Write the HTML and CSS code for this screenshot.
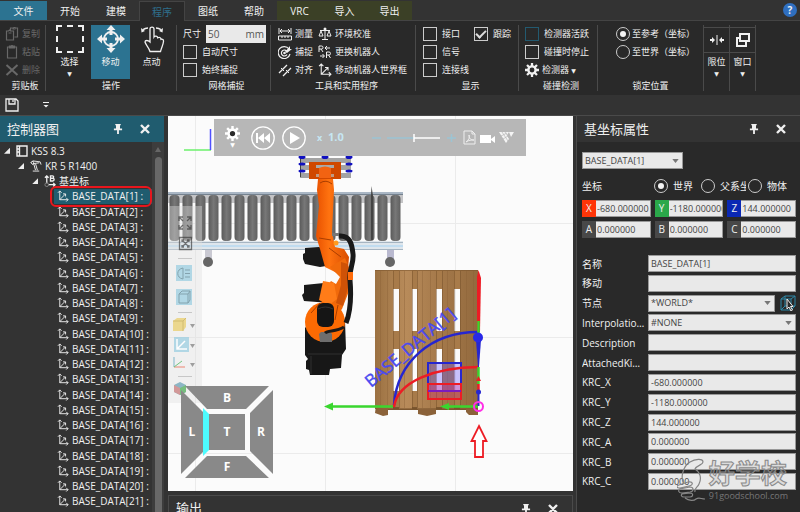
FILE: index.html
```html
<!DOCTYPE html>
<html lang="zh-CN">
<head>
    <meta charset="UTF-8">
    <meta name="viewport" content="width=device-width, initial-scale=1.0">
    <title>控制器图</title>
    <link rel="stylesheet" href="styles.css">
</head>
<body>
    <!-- icons used more than once -->
    <svg class="sprite" aria-hidden="true">
        <symbol id="i-pin" viewBox="0 0 10 11"><path d="M2 0h6v1.5H7.2V5H9.5v2H6v4H4V7H.5V5h2.300V1.500H2z" fill="currentColor"/></symbol>
        <symbol id="i-close" viewBox="0 0 10 10"><path d="M1 1l8 8M9 1l-8 8" stroke="currentColor" stroke-width="2.400"/></symbol>
        <symbol id="i-axes" viewBox="0 0 13 13"><path d="M3 1v9.500h9M3 10.500l6-6M1 3l2-2 2 2M10 8.500l2 2-2 2M6.500 4.200h2.800v2.800" fill="none" stroke="currentColor"/></symbol>
        <symbol id="i-gear" viewBox="0 0 16 16"><path d="M8 0v16M0 8h16M2.300 2.300l11.400 11.400M13.700 2.300L2.300 13.700" stroke="currentColor" stroke-width="2.600"/><circle cx="8" cy="8" r="4.200" fill="none" stroke="currentColor" stroke-width="2.600"/><circle class="gear-hole" cx="8" cy="8" r="2.800"/></symbol>
    </svg>

    <!-- BEGIN::tabs -->
    <nav class="tabs">
        <a class="tab tab-file" href="#">文件</a>
        <a class="tab" href="#">开始</a>
        <a class="tab" href="#">建模</a>
        <a class="tab tab-active" href="#">程序</a>
        <a class="tab" href="#">图纸</a>
        <a class="tab" href="#">帮助</a>
        <a class="tab tab-vrc" href="#">VRC</a>
        <a class="tab tab-vrc" href="#">导入</a>
        <a class="tab tab-vrc" href="#">导出</a>
        <button class="help">?</button>
    </nav>
    <!-- END::tabs -->

    <!-- BEGIN::ribbon -->
    <section class="ribbon">
        <div class="group group-clip">
            <div class="rows">
                <button class="tool" disabled><svg class="icon" viewBox="0 0 13 14"><path d="M5 4V1h3l1-1 1 1h2v9H9M1 4h2l1-1 1 1h3v9H1zM3 6h3M7 2h3" fill="none" stroke="currentColor" stroke-width="1.200"/></svg>复制</button>
                <button class="tool" disabled><svg class="icon" viewBox="0 0 13 14"><path d="M2 2h9v11H2zM4 3V1h2l.5-1L7 1h2v2z" fill="none" stroke="currentColor" stroke-width="1.200"/></svg>粘贴</button>
                <button class="tool" disabled><svg class="icon" viewBox="0 0 13 14"><path d="M1 2l11 10M12 2L1 12" stroke="currentColor" stroke-width="2"/></svg>删除</button>
            </div>
            <h2>剪贴板</h2>
        </div>
        <div class="group group-action">
            <div class="bigs">
                <button class="big"><svg viewBox="0 0 28 28"><path d="M1 6V1h5M11 1h6M22 1h5v5M27 11v6M27 22v5h-5M17 27h-6M6 27H1v-5M1 17v-6" fill="none" stroke="currentColor" stroke-width="2"/></svg>选择<span class="caret">▼</span></button>
                <button class="big big-on"><svg viewBox="0 0 28 28"><circle cx="14" cy="14" r="7" fill="none" stroke="currentColor" stroke-width="1.800"/><path d="M14 0l4.500 5h-3v5h-3V5h-3zM14 28l4.500-5h-3v-5h-3v5h-3zM0 14l5-4.500v3h5v3H5v3zM28 14l-5-4.500v3h-5v3h5v3z" fill="currentColor"/></svg>移动</button>
                <button class="big"><svg viewBox="0 0 28 28"><path d="M12 17V4c0-2.500 4-2.500 4 0v8c1-1.500 3.500-1 3.800.8 1.200-1 3.200-.3 3.200 1.500 1.500-.5 2.700.5 2.500 2.200-.5 4-2 6-3 10H12c-1-4-4-6-5-9.500 0-2 3-2 5 0z" fill="none" stroke="currentColor" stroke-width="1.300"/><path d="M10 3C8 3 6.500 3.500 5 4.700M18 3c2 0 3.500.5 5 1.700" fill="none" stroke="currentColor" stroke-width="1.500"/><path d="M3 3l.5 4.500L7 6zM25 3l-.5 4.500L21 6z" fill="currentColor"/></svg>点动</button>
            </div>
            <h2>操作</h2>
        </div>
        <div class="group group-grid">
            <div class="rows">
                <div class="size"><label for="size">尺寸</label><span class="size-box"><input id="size" value="50"><span>mm</span></span></div>
                <label class="check"><input type="checkbox">自动尺寸</label>
                <label class="check"><input type="checkbox">始终捕捉</label>
            </div>
            <h2>网格捕捉</h2>
        </div>
        <div class="group group-tools">
            <div class="cols">
                <div class="rows">
                    <button class="tool"><svg class="icon" viewBox="0 0 14 14"><path d="M1 1v6M13 1v6M2 4h10M4 2L2 4l2 2M10 2l2 2-2 2M.5 9h13v4H.5zM4 9v2M7 9v2M10 9v2" fill="none" stroke="currentColor"/></svg>测量</button>
                    <button class="tool"><svg class="icon" viewBox="0 0 14 14"><path d="M11 4a6 6 0 1 0 1 5M9 6.500a3 3 0 1 0 0 3" fill="none" stroke="currentColor" stroke-width="1.200"/><circle cx="6.500" cy="8" r="1.300" fill="currentColor"/><path d="M7 7l5-6v3l2 0-5 4z" fill="currentColor"/></svg>捕捉</button>
                    <button class="tool"><svg class="icon" viewBox="0 0 14 14"><path d="M1 10L9 2M5 13l8-8" stroke="currentColor" stroke-width="1.300"/><path d="M3 5l3 3M8 7l3 3" stroke="currentColor"/></svg>对齐</button>
                </div>
                <div class="rows">
                    <button class="tool"><svg class="icon" viewBox="0 0 14 14"><path d="M7 1v11M4 12.500h6M2 3.500h10M3 4L1 9h4zM11 4L9 9h4z" fill="none" stroke="currentColor"/><circle cx="7" cy="2" r="1.500" fill="currentColor"/></svg>环境校准</button>
                    <button class="tool"><svg class="icon" viewBox="0 0 14 14"><path d="M1 7V1h2.500a1.500 1.500 0 0 1 0 3H1M3 4l2 3M8.500 13V7H11a1.500 1.500 0 0 1 0 3H8.500M10.500 10l2 3M7 3h5M9 1L7 3l2 2M2 11h4M4.500 9l2 2-2 2" fill="none" stroke="currentColor"/></svg>更换机器人</button>
                    <button class="tool"><svg class="icon"><use href="#i-axes"/></svg>移动机器人世界框</button>
                </div>
            </div>
            <h2>工具和实用程序</h2>
        </div>
        <div class="group group-show">
            <div class="cols">
                <div class="rows">
                    <label class="check"><input type="checkbox">接口</label>
                    <label class="check"><input type="checkbox">信号</label>
                    <label class="check"><input type="checkbox">连接线</label>
                </div>
                <div class="rows">
                    <label class="check"><input type="checkbox" checked>跟踪</label>
                </div>
            </div>
            <h2>显示</h2>
        </div>
        <div class="group group-collide">
            <div class="rows">
                <label class="check check-blue"><input type="checkbox">检测器活跃</label>
                <label class="check"><input type="checkbox">碰撞时停止</label>
                <button class="tool"><svg class="icon"><use href="#i-gear"/></svg><span>检测器 <span class="caret">▼</span></span></button>
            </div>
            <h2>碰撞检测</h2>
        </div>
        <div class="group group-lock">
            <div class="rows">
                <label class="check"><input type="radio" name="lock" checked>至参考（坐标）</label>
                <label class="check"><input type="radio" name="lock">至世界（坐标）</label>
            </div>
            <h2>锁定位置</h2>
        </div>
        <button class="drop"><span class="drop-icon"><svg viewBox="0 0 16 16"><path d="M8 3v10" stroke="currentColor"/><path d="M1 7h2V5l3 3-3 3V9H1zM15 7h-2V5l-3 3 3 3V9h2z" fill="currentColor"/></svg></span>限位<span class="caret">▼</span></button>
        <button class="drop"><span class="drop-icon"><svg viewBox="0 0 16 16"><path d="M5 2h9v7H5zM4 6H2v8h9v-4" fill="none" stroke="currentColor" stroke-width="2"/></svg></span>窗口<span class="caret">▼</span></button>
    </section>
    <!-- END::ribbon -->

    <div class="quick">
        <button aria-label="保存"><svg viewBox="0 0 14 14"><path d="M1 1h10l2 2v10H1zM4 1v5h6V1M8 2v2" fill="none" stroke="currentColor" stroke-width="1.300"/></svg></button>
        <button class="quick-more" aria-label="更多"><svg viewBox="0 0 6 6"><path d="M0 .5h6" stroke="currentColor"/><path d="M.5 3h5L3 5.500z" fill="currentColor"/></svg></button>
    </div>

    <main class="main">
        <!-- BEGIN::tree -->
        <aside class="panel tree-panel">
            <header class="panel-head head-teal">
                <h1>控制器图</h1>
                <button aria-label="固定"><svg><use href="#i-pin"/></svg></button>
                <button aria-label="关闭"><svg><use href="#i-close"/></svg></button>
            </header>
            <div class="tree-body">
                <ul class="tree">
                    <li class="lv1"><i class="fold"></i><svg viewBox="0 0 12 12"><path d="M1 1h10v10H1zM3.500 1v10M1 4h2M1 7h2" fill="none" stroke="currentColor" stroke-width="1.400"/></svg>KSS 8.3</li>
                    <li class="lv2"><i class="fold"></i><svg viewBox="0 0 13 13"><path d="M1 3l2-2 8 1 1 3M3 4l7-1M3 1L1 3l2 2 1-2zM4 4l2 7M6 4l2 7M3 12h7" fill="none" stroke="currentColor"/></svg>KR 5 R1400</li>
                    <li class="lv3"><i class="fold"></i><svg viewBox="0 0 13 13"><path d="M3 9V1M1 3l2-2 2 2M5 10.500h7M10 8.500l2 2-2 2M7 1v5.500h2.500a1.500 1.500 0 0 0 0-3H7h2.200a1.200 1.200 0 0 0 0-2.500z" fill="none" stroke="currentColor" stroke-width="1.400"/><circle cx="3" cy="10.500" r="2" fill="none" stroke="#888"/></svg>基坐标</li>
                    <li class="lv4 selected"><svg><use href="#i-axes"/></svg>BASE_DATA[1] :</li>
                    <li class="lv4"><svg><use href="#i-axes"/></svg>BASE_DATA[2] :</li>
                    <li class="lv4"><svg><use href="#i-axes"/></svg>BASE_DATA[3] :</li>
                    <li class="lv4"><svg><use href="#i-axes"/></svg>BASE_DATA[4] :</li>
                    <li class="lv4"><svg><use href="#i-axes"/></svg>BASE_DATA[5] :</li>
                    <li class="lv4"><svg><use href="#i-axes"/></svg>BASE_DATA[6] :</li>
                    <li class="lv4"><svg><use href="#i-axes"/></svg>BASE_DATA[7] :</li>
                    <li class="lv4"><svg><use href="#i-axes"/></svg>BASE_DATA[8] :</li>
                    <li class="lv4"><svg><use href="#i-axes"/></svg>BASE_DATA[9] :</li>
                    <li class="lv4"><svg><use href="#i-axes"/></svg>BASE_DATA[10] :</li>
                    <li class="lv4"><svg><use href="#i-axes"/></svg>BASE_DATA[11] :</li>
                    <li class="lv4"><svg><use href="#i-axes"/></svg>BASE_DATA[12] :</li>
                    <li class="lv4"><svg><use href="#i-axes"/></svg>BASE_DATA[13] :</li>
                    <li class="lv4"><svg><use href="#i-axes"/></svg>BASE_DATA[14] :</li>
                    <li class="lv4"><svg><use href="#i-axes"/></svg>BASE_DATA[15] :</li>
                    <li class="lv4"><svg><use href="#i-axes"/></svg>BASE_DATA[16] :</li>
                    <li class="lv4"><svg><use href="#i-axes"/></svg>BASE_DATA[17] :</li>
                    <li class="lv4"><svg><use href="#i-axes"/></svg>BASE_DATA[18] :</li>
                    <li class="lv4"><svg><use href="#i-axes"/></svg>BASE_DATA[19] :</li>
                    <li class="lv4"><svg><use href="#i-axes"/></svg>BASE_DATA[20] :</li>
                    <li class="lv4"><svg><use href="#i-axes"/></svg>BASE_DATA[21] :</li>
                </ul>
                <div class="scroll"><i class="scroll-up"></i><div class="thumb"></div></div>
            </div>
        </aside>
        <!-- END::tree -->

        <!-- BEGIN::center -->
        <div class="center">
            <section class="view">
                <svg class="scene" viewBox="168 116 405 375" preserveAspectRatio="xMinYMin slice">
                    <defs>
                        <linearGradient id="roll"><stop offset="0" stop-color="#5a5a5a"/><stop offset=".5" stop-color="#777"/><stop offset="1" stop-color="#606060"/></linearGradient>
                        <pattern id="rollers" x="168" y="195" width="13" height="46" patternUnits="userSpaceOnUse">
                            <rect x="1.500" width="10" height="46" rx="4" fill="url(#roll)"/>
                        </pattern>
                        <linearGradient id="wood"><stop offset="0" stop-color="#9b7142"/><stop offset=".3" stop-color="#b88b5a"/><stop offset=".6" stop-color="#a67a4b"/><stop offset="1" stop-color="#936a3e"/></linearGradient>
                        <linearGradient id="arm"><stop offset="0" stop-color="#e85100"/><stop offset=".4" stop-color="#ff7310"/><stop offset="1" stop-color="#d94d00"/></linearGradient>
                    </defs>
                    <!-- floor grid -->
                    <path d="M195.500 116v375M325.500 116v375M455.500 116v375M168 223.500h405M168 337.500h405M168 453.500h405" stroke="#ebebeb"/>
                    <path d="M184 150h27" stroke="#6bf06b" stroke-width="1.500"/>
                    <path d="M210.500 129v21" stroke="#5050ff" stroke-width="1.500"/>
                    <!-- conveyor -->
                    <rect x="168" y="195" width="235" height="8" fill="#c4c4c6"/>
                    <rect x="168" y="192" width="235" height="3" fill="#a9b6c4"/>
                    <path d="M168 194.500h235" stroke="#75828f"/>
                    <rect x="168" y="195" width="235" height="46" fill="url(#rollers)"/>
                    <rect x="168" y="241" width="235" height="9" fill="#dfe6ec"/>
                    <path d="M168 242.500h235M168 249.500h235" stroke="#a6b5c2"/>
                    <path d="M168 246h235" stroke="#c0dcf0" stroke-width="2"/>
                    <rect x="205" y="250" width="7" height="10" fill="#c9c9d2"/><circle cx="208" cy="262" r="5" fill="#666"/>
                    <rect x="387" y="250" width="7" height="10" fill="#b9b9cf"/><circle cx="390" cy="262" r="5" fill="#666"/>
                    <path d="M371.500 186l1.500 10v44h-2v-44z" fill="#444"/>
                    <!-- robot -->
                    <path d="M300 158h51v5h-51zM300 165h51v5h-51zM300 173h51v5h-51z" fill="#a3a3a3"/>
                    <path d="M300.500 157v20" stroke="#444"/>
                    <g fill="#1010c0"><ellipse cx="302" cy="157" rx="3.500" ry="2"/><ellipse cx="325" cy="157" rx="3.500" ry="2"/><ellipse cx="349" cy="157" rx="3.500" ry="2"/><ellipse cx="302" cy="164" rx="3.500" ry="1.500"/><ellipse cx="349" cy="164" rx="3.500" ry="1.500"/><ellipse cx="302" cy="171" rx="3.500" ry="1.500"/><ellipse cx="349" cy="171" rx="3.500" ry="1.500"/></g>
                    <path d="M309 162h32v17h-32z" fill="#d04800"/>
                    <path d="M316 165h18v3h-18z" fill="#aaa"/>
                    <path d="M316 174h18v3h-18z" fill="#bf9a83"/>
                    <path d="M319 168q6-3 12 0v10h-12z" fill="#f26312"/>
                    <path d="M305 248l14-1 13 5v13l-12 2-15-3-2-5v-5l2-1z" fill="#191919"/>
                    <path d="M304 285l20-2 10 5-4 15-26-2-2-6 2-2z" fill="#191919"/>
                    <path d="M305 328l6-7h34l1 28-4 6-1 13-11 1-1 6h-19l-1-5-3-1v-8l2-2-3-4z" fill="#171717"/>
                    <path d="M308 354h34M311 356v18" stroke="#303030"/>
                    <path d="M318 179h15l1 11-2 42 3 15 9 2 5 8-1 12-11 4-12-6-5-18-4-13 3-30-2-16z" fill="url(#arm)"/>
                    <path d="M330 267l15-9 5 12 1 16-9 23-11 12-12-9 6-23 6-8 5 3 4-7z" fill="#f16a0b"/>
                    <path d="M341 262l7 2 2 16-7 26-7-3 5-18z" fill="#cf5207"/>
                    <ellipse cx="325" cy="322" rx="20" ry="20" fill="#fb6a03"/>
                    <path d="M323 281l11 2 3 16-8 6-10-5z" fill="#ff7c18"/>
                    <path d="M320 183q6-4 12 1M319 238l12 2M329 248l12 9M320 303l-9 10M338 305l-3 15" fill="none" stroke="#aa3e00"/>
                    <rect x="317" y="303" width="17" height="24" rx="6" fill="#151515"/>
                    <path d="M318 309q7-4 15 0" stroke="#333" fill="none"/>
                    <path d="M319 334l2-2h9l2 2v8h-12z" fill="#6e6e6e"/>
                    <path d="M339 236c11-1 13 8 14 18 1 10-4 14-3 26s2 28-4 43" fill="none" stroke="#191919" stroke-width="5"/>
                    <path d="M344 327c-8 5-16 3-19 6" fill="none" stroke="#191919" stroke-width="3"/>
                    <path d="M348 272h5v8h-5z" fill="#ff6c0a"/>
                    <circle cx="336" cy="243" r="2.500" fill="#ff9a20"/>
                    <path d="M332 233h7v3h-7z" fill="#777"/>
                    <!-- pallet -->
                    <path d="M376 405h101v5h-101z" fill="#7c5730"/>
                    <path d="M376 405h12v10l-5 1-8-3zM418 405h18v9l-9 2-9-2zM466 405h12v10h-9l-3-3z" fill="#8b6239"/>
                    <path d="M377 270h100v19h-100zM377 331h100v18h-100zM377 391h100v16h-100z" fill="#a87b4a"/>
                    <path d="M375 270h18v139h-18zM399 270h13v139h-13zM417 270h19v139h-19zM442 270h12v139h-12zM460 270h18v139h-18z" fill="url(#wood)"/>
                    <path d="M380.500 271v137M387.500 271v137M404.500 271v137M422.500 271v137M430.500 271v137M447.500 271v137M466.500 271v137M473.500 271v137" stroke="#8b6137" opacity=".4"/>
                    <path d="M393.500 270v139M399.500 270v139M412.500 270v139M417.500 270v139M436.500 270v139M442.500 270v139M454.500 270v139M460.500 270v139M375 270.500h103M375 408.500h103" stroke="#75502a" opacity=".5"/>
                    <!-- frame gizmo -->
                    <path d="M331 406.500h62M448 406.500h30" stroke="#3ad62e" stroke-width="2.500"/>
                    <path d="M324 406.500l9-4v8zM440 406.500l9-3.500v7z" fill="#3ad62e"/>
                    <rect x="428" y="363" width="33" height="28" fill="#6a58ff" fill-opacity=".35" stroke="#2626d0" stroke-width="2"/>
                    <rect x="428" y="384" width="33" height="15" fill="#e02080" fill-opacity=".3" stroke="#ed1c24" stroke-width="2"/>
                    <path d="M428 391h33" stroke="#7a1cc0" stroke-width="2"/>
                    <path d="M394 405C397 362 431 332 478 332" fill="none" stroke="#2626d0" stroke-width="2.500"/>
                    <path d="M394 407c3-25 41-40 84-40" fill="none" stroke="#ed1c24" stroke-width="2.500"/>
                    <path d="M478.500 270l2.500 8-1 54h-3v-55z" fill="#ed1c24"/>
                    <path d="M478.500 321v16M478.500 367v17" stroke="#3ad62e" stroke-width="2.500"/>
                    <path d="M478.500 384v8" stroke="#ed1c24" stroke-width="2.500"/>
                    <path d="M476 340h5l-2 27h-1z" fill="#2626d0"/><circle cx="478" cy="337.500" r="5" fill="#2828e8"/>
                    <path d="M478.500 376l2.500 5h-5z" fill="#ed1c24"/>
                    <path d="M478.500 390v16" stroke="#2626d0" stroke-width="2"/><circle cx="478.500" cy="392" r="2.500" fill="#2626d0"/>
                    <circle cx="478.500" cy="406.500" r="4.500" fill="none" stroke="#ff2ee6" stroke-width="2"/>
                    <text class="frame-name" transform="translate(371 388) rotate(-40)">BASE_DATA[1]</text>
                    <path d="M479 426l7.500 15h-3.500v16h-8v-16h-3.500z" fill="#fff" stroke="#ed1c24" stroke-width="1.800"/>
                </svg>

                <!-- view toolbar on the left edge -->
                <div class="rail">
                    <svg viewBox="0 0 34 197">
                        <g fill="none" stroke="#555" stroke-width="1.300"><path d="M11 15v-4h4M11 11l4 4M19 11h4v4M23 11l-4 4M11 19v4h4M11 23l4-4M23 19v4h-4M23 23l-4-4"/><path d="M11.500 31.500h12v12h-12zM14 36v-2h2M19 34h2v2M14 39v2h2M19 41h2v-2M14 34l7 7M21 34l-7 7"/></g>
                        <path d="M10 52.500h14M10 106.500h14M10 170.500h14" stroke="#bbb"/>
                        <path d="M8 59h16v16H8zM8 83h16v16H8zM6 131h15v15H6z" fill="#9fcfe0"/>
                        <path d="M15 62v11M15 62c-7 1-7 10 0 11M17 64h5M17 67.500h5M17 71h5M11 88h9v9h-9zM11 88l3-3h8v9l-2 3M20 88l2-3" fill="none" stroke="#668d9b"/>
                        <path d="M5 115l4-3h9v9l-3 4H5z" fill="#e8cf73"/><path d="M5 115h10v10M15 115l3-3" fill="none" stroke="#c7ac50"/>
                        <path d="M9 133v10h10M9 143l8-8" fill="none" stroke="#fff" stroke-width="1.500"/>
                        <path d="M6 151v10" stroke="#61a5bd"/><path d="M6 161h11" stroke="#e86a50"/><path d="M6 161l8-6" stroke="#50b860"/>
                        <path d="M12 176l6 3v7l-6 3-6-3v-7z" fill="#71a6b8"/><path d="M12 182l6-3v7l-6 3z" fill="#55b05f"/><path d="M12 182l-6-3v7l6 3z" fill="#c98080"/>
                        <path d="M22 118h5l-2.500 4zM22 138h5l-2.500 4zM22 157h5l-2.500 4zM22 182h5l-2.500 4z" fill="#888"/>
                    </svg>
                </div>

                <!-- simulation bar -->
                <div class="playbar">
                    <button class="gear" aria-label="设置"><svg><use href="#i-gear"/></svg><span class="caret">▼</span></button>
                    <button aria-label="重置"><svg viewBox="0 0 24 24"><circle cx="12" cy="12" r="11.200" fill="none" stroke="currentColor" stroke-width="1.300"/><path d="M5 7h2v10H5zM13 7v10l-6-5zM19 7v10l-6-5z" fill="currentColor"/></svg></button>
                    <button aria-label="播放"><svg viewBox="0 0 24 24"><circle cx="12" cy="12" r="11.200" fill="none" stroke="currentColor" stroke-width="1.300"/><path d="M8 6l10 6-10 6z" fill="currentColor"/></svg></button>
                    <span class="speed"><small>x</small> 1.0</span>
                    <svg class="slider" viewBox="0 0 84 12"><path d="M0 6h9M75 6h9M79.500 2v8M15 6h27" stroke="#9cc4d3" stroke-width="1.500"/><path d="M42 6h26M42 2v8" stroke="#fff" stroke-width="1.500"/></svg>
                    <svg class="export" viewBox="0 0 52 16"><path d="M1 1h8l3 3v10H1zM9 1v3h3M3 12c3-2 4-5 3-7 0 4 2 5 5 5-3 0-5 0-8 2" fill="none" stroke="#eee"/><path d="M17 5h11v8H17zM28 9l4-3v7l-4-3z" fill="#fff"/><path d="M36 2h10l-2 3 2 4-3 4z" fill="#f4f4f4"/><path d="M46 2h5l-3 5z" fill="#f4f4f4"/><path d="M39 2l6 9M42 2l4 6M38 6l6-3M40 9l5-3" stroke="#b7b7b7" stroke-width=".7"/></svg>
                </div>

                <!-- view cube -->
                <svg class="cube" viewBox="0 0 92 92">
                    <g fill="#898989"><path d="M4 0h84L65 23H26zM92 4v84L69 65V27zM88 92H4l22-22h39zM0 88V4l22 22v40zM28 28h36v36H28z"/></g>
                    <path d="M22 22l6 6v36l-6 6z" fill="#4dfcff"/>
                    <g class="cube-text"><text x="46" y="16">B</text><text x="11" y="50">L</text><text x="46" y="50">T</text><text x="80" y="50">R</text><text x="46" y="85">F</text></g>
                </svg>
            </section>
            <section class="output">
                <h1>输出</h1>
                <button aria-label="固定"><svg><use href="#i-pin"/></svg></button>
                <button aria-label="关闭"><svg><use href="#i-close"/></svg></button>
            </section>
        </div>
        <!-- END::center -->

        <!-- BEGIN::properties -->
        <aside class="panel props-panel">
            <header class="panel-head">
                <h1>基坐标属性</h1>
                <button aria-label="固定"><svg><use href="#i-pin"/></svg></button>
                <button aria-label="关闭"><svg><use href="#i-close"/></svg></button>
            </header>
            <form class="props">
                <select class="pick" aria-label="基坐标"><option>BASE_DATA[1]</option></select>
                <div class="frame-row">
                    <span>坐标</span>
                    <label class="check"><input type="radio" name="frame" checked>世界</label>
                    <label class="check"><input type="radio" name="frame"><span class="clip">父系坐标</span></label>
                    <label class="check"><input type="radio" name="frame">物体</label>
                </div>
                <div class="coords">
                    <label class="coord x"><b>X</b><input value="-680.000000"></label>
                    <label class="coord y"><b>Y</b><input value="-1180.000000"></label>
                    <label class="coord z"><b>Z</b><input value="144.000000"></label>
                    <label class="coord"><b>A</b><input value="0.000000"></label>
                    <label class="coord"><b>B</b><input value="0.000000"></label>
                    <label class="coord"><b>C</b><input value="0.000000"></label>
                </div>
                <div class="fields">
                    <div class="field"><label for="f1">名称</label><input id="f1" value="BASE_DATA[1]"></div>
                    <div class="field"><label for="f2">移动</label><input id="f2"></div>
                    <div class="field"><label for="f3">节点</label><select id="f3"><option>*WORLD*</option></select><button type="button" class="picker" aria-label="选取节点"><svg viewBox="0 0 16 16"><path d="M1 4h10v11H1zM1 4l4-3h10v10l-4 4M11 4l4-3M5 1v10l-4 4M5 11h10" fill="none" stroke="#2f89a8"/><path d="M7 4v10l2-2 2 4 1.500-1-2-3.500H13z" fill="#292929" stroke="#eee"/></svg></button></div>
                    <div class="field"><label for="f4">Interpolation Mode</label><select id="f4"><option>#NONE</option></select></div>
                    <div class="field"><label for="f5">Description</label><input id="f5"></div>
                    <div class="field"><label for="f6">AttachedKinematics</label><input id="f6"></div>
                    <div class="field"><label for="f7">KRC_X</label><input id="f7" value="-680.000000"></div>
                    <div class="field"><label for="f8">KRC_Y</label><input id="f8" value="-1180.000000"></div>
                    <div class="field"><label for="f9">KRC_Z</label><input id="f9" value="144.000000"></div>
                    <div class="field"><label for="f10">KRC_A</label><input id="f10" value="0.000000"></div>
                    <div class="field"><label for="f11">KRC_B</label><input id="f11" value="0.000000"></div>
                    <div class="field"><label for="f12">KRC_C</label><input id="f12" value="0.000000"></div>
                </div>
            </form>
            <div class="mark">
                <svg viewBox="0 0 32 44"><path d="M7 26C3 20 6 8 13 4c5-3 13-4 13 0 0 3-6 3-8 7 5 3 7 9 4 15-1 3-5 4-4 8M2 27l9-3c5-1 6 3 1 4l-9 2c-4 0-4-2-1-3zM3 31l10-2c4 0 4 4 0 5l-8 1c-4 0-4-3-2-4zM5 36l8-1c4 0 3 4 0 4H7c-3 0-3-2-2-3zM8 40c4 3 9 3 11 1 3-2 5 0 9 0" fill="none" stroke="#858585" stroke-width="1.200"/></svg>
                <div><strong>好学校</strong><span>91goodschool.com</span></div>
            </div>
        </aside>
        <!-- END::properties -->
    </main>
</body>
</html>
```

FILE: styles.css
```css
:root{
    --dark: #292929;
    --bar: #333;
    --teal: #205c6f;
    --blue: #2c7391;
    --line: #4a4a4a;
    --field: #e9e9e9;
}

*{
    margin: 0;
    padding: 0;
    box-sizing: border-box;
}

body{
    display: flex;
    flex-direction: column;
    height: 100vh;
    overflow: hidden;
    background: var(--bar);
    color: #f0f0f0;
    font-family: "Open Sans", "Noto Sans CJK SC", sans-serif;
    font-size: 10px;
    line-height: 14px;
}

button, input, select{
    font: inherit;
    color: inherit;
    background: none;
    border: 0;
    border-radius: 0;
}

h1, h2{
    font-weight: 400;
}

a{
    color: inherit;
    text-decoration: none;
}

svg{
    display: block;
    flex: none;
}

.sprite{
    position: absolute;
    width: 0;
    height: 0;
}

.gear-hole{
    fill: var(--dark);
}

.caret{
    font-family: "DejaVu Sans", sans-serif;
    font-size: 6px;
    line-height: 8px;
}

/* tabs */
.tabs{
    display: flex;
    flex: none;
    height: 21px;
    padding-top: 1px;
    border-bottom: 1px solid #444;
}

.tab{
    width: 46px;
    line-height: 20px;
    text-align: center;
}

.tab-file{
    width: 47px;
    background: var(--blue);
}

.tab-active{
    height: 20px;
    background: var(--dark);
    border: 1px solid #444;
    border-bottom: 0;
    color: #2f6f8c;
}

.tab-vrc{
    width: 45px;
    background: #3b4026;
}

.help{
    width: 14px;
    height: 14px;
    margin: 2px 3px 0 auto;
    border-radius: 50%;
    background: #2f6fc0;
    font-weight: 700;
}

/* ribbon */
.ribbon{
    display: flex;
    flex: none;
    height: 74px;
    padding: 4px 0;
    background: var(--dark);
    font-size: 9px;
}

.group{
    display: flex;
    flex-direction: column;
    justify-content: space-between;
    flex: none;
    border-right: 1px solid var(--line);
    white-space: nowrap;
}

.group h2{
    font-size: 9px;
    line-height: 10px;
    text-align: center;
}

.group-clip{ width: 46px; padding-left: 5px; }
.group-action{ width: 131px; }
.group-grid{ width: 94px; padding-left: 6px; }
.group-tools{ width: 145px; padding-left: 7px; }
.group-show{ width: 103px; padding-left: 7px; }
.group-collide{ width: 79px; padding-left: 6px; }
.group-lock{ width: 106px; padding-left: 18px; }
.group-lock h2{ padding-right: 18px; }

.rows{
    display: grid;
    grid-auto-rows: 18px;
}

.cols{
    display: flex;
    gap: 5px;
}

.tool, .check, .size{
    display: flex;
    align-items: center;
    gap: 3px;
}

.tool:disabled{
    color: #686868;
}

.icon{
    width: 14px;
    height: 14px;
}

.check{
    gap: 5px;
}

.check input{
    appearance: none;
    display: grid;
    place-items: center;
    flex: none;
    width: 14px;
    height: 14px;
    border: 1px solid #ccc;
}

.check input[type=radio]{
    border-radius: 50%;
}

.check input[type=radio]:checked::before{
    content: "";
    width: 6px;
    height: 6px;
    border-radius: 50%;
    background: #f4f4f4;
}

.check input[type=checkbox]:checked::before{
    content: "";
    width: 8px;
    height: 4px;
    margin-bottom: 2px;
    border: solid #ddd;
    border-width: 0 0 2px 2px;
    transform: rotate(-45deg);
}

.check-blue input{
    border-color: #235a70;
}

.group-lock .check{
    gap: 2px;
}

.size{
    gap: 5px;
}

.size-box{
    display: flex;
    align-items: center;
    width: 60px;
    height: 18px;
    padding: 0 2px;
    background: var(--field);
    color: #555;
    font-size: 10px;
}

.size-box input{
    flex: 1;
    min-width: 0;
}

.bigs{
    display: flex;
    gap: 2px;
    padding-left: 4px;
}

.big{
    display: flex;
    flex-direction: column;
    align-items: center;
    width: 39px;
    height: 54px;
    line-height: 18px;
}

.big svg{
    width: 28px;
    height: 28px;
}

.big-on{
    background: var(--blue);
}

.big .caret, .drop .caret{
    line-height: 6px;
}

.drop{
    display: flex;
    flex-direction: column;
    align-items: center;
    flex: none;
    width: 26px;
    border-right: 1px solid var(--line);
    line-height: 18px;
}

.drop-icon{
    display: grid;
    place-items: center;
    align-self: stretch;
    height: 26px;
    margin-top: 2px;
    border: solid var(--line);
    border-width: 1px 0;
}

.drop-icon svg{
    width: 16px;
    height: 16px;
}

/* quick access */
.quick{
    display: flex;
    align-items: center;
    flex: none;
    gap: 24px;
    height: 20px;
    padding-left: 5px;
}

.quick svg{
    width: 14px;
    height: 14px;
}

.quick .quick-more svg{
    width: 6px;
    height: 6px;
}

/* main area */
.main{
    display: grid;
    grid-template-columns: 164px 1fr 224px;
    flex: 1;
    min-height: 0;
    border-top: 1px solid var(--line);
}

.panel, .center{
    display: flex;
    flex-direction: column;
    min-width: 0;
    min-height: 0;
}

.center{
    padding: 0 3px 0 4px;
}

.panel-head, .output{
    display: flex;
    align-items: center;
    flex: none;
    gap: 17px;
    height: 26px;
    padding: 0 14px 0 7px;
}

.panel-head h1, .output h1{
    flex: 1;
    font-size: 13px;
    line-height: 20px;
}

.panel-head svg, .output svg{
    width: 10px;
    height: 10px;
}

.head-teal{
    background: var(--teal);
}

/* tree */
.tree-body{
    display: flex;
    flex: 1;
    min-height: 0;
}

.tree{
    display: grid;
    grid-auto-rows: 1fr;
    flex: 1;
    padding: 1px 0 3px;
    list-style: none;
}

.tree li{
    display: flex;
    align-items: center;
    gap: 3px;
    min-height: 0;
    white-space: nowrap;
}

.tree svg{
    width: 12px;
    height: 12px;
}

.tree .lv1{ padding-left: 4px; }
.tree .lv2{ padding-left: 18px; }
.tree .lv3{ padding-left: 32px; }
.tree .lv4{ padding-left: 57px; }

.fold{
    width: 6px;
    height: 6px;
    margin-right: 3px;
    background: #eee;
    clip-path: polygon(100% 0, 100% 100%, 0 100%);
}

/* marker round the chosen base */
.tree .selected{
    position: relative;
    background: linear-gradient(90deg, transparent 54px, var(--teal) 54px);
}

.selected::after{
    content: "";
    position: absolute;
    inset: -3px 0 -3px 50px;
    border: 2px solid #e8161d;
    border-radius: 6px;
}

.scroll{
    display: flex;
    flex-direction: column;
    align-items: center;
    gap: 5px;
    width: 12px;
    padding-top: 5px;
    background: #3d3d3d;
}

.scroll-up{
    width: 6px;
    height: 5px;
    background: #666;
    clip-path: polygon(50% 0, 100% 100%, 0 100%);
}

.thumb{
    flex: 1;
    width: 7px;
    border-radius: 4px 4px 0 0;
    background: #686868;
}

/* 3d view */
.view{
    position: relative;
    flex: 1;
    min-height: 0;
    overflow: hidden;
    background: #fbfbfb;
}

.scene{
    width: 100%;
    height: 100%;
}

.frame-name{
    fill: #4a4af0;
    stroke: #4a4af0;
    stroke-width: .4px;
    font-size: 17px;
}

.rail{
    position: absolute;
    left: 0;
    top: 90px;
    background: rgba(225, 225, 225, .5);
    opacity: .8;
}

.rail svg{
    width: 34px;
    height: 197px;
}

.playbar{
    position: absolute;
    left: 46px;
    top: 3px;
    display: flex;
    align-items: center;
    gap: 7px;
    height: 37px;
    padding: 0 11px;
    background: #b7b7b7;
    color: #fff;
}

.playbar button svg{
    width: 24px;
    height: 24px;
}

.playbar .gear{
    margin-right: 4px;
}

.playbar .gear svg{
    width: 15px;
    height: 15px;
}

.playbar .gear-hole{
    fill: #b7b7b7;
}

.gear .caret{
    display: block;
}

.speed{
    margin: 0 21px 0 4px;
    color: #c6e6f2;
    font-size: 11px;
    font-weight: 700;
}

.speed small{
    margin-right: 3px;
    font-size: 9px;
}

.slider{
    width: 84px;
    height: 12px;
}

.export{
    width: 52px;
    height: 16px;
}

.cube{
    position: absolute;
    left: 13px;
    bottom: 13px;
    width: 92px;
    height: 92px;
}

.cube-text{
    fill: #fff;
    font-size: 12px;
    font-weight: 700;
    text-anchor: middle;
}

.output{
    align-items: flex-start;
    height: 17px;
    margin-top: 4px;
    overflow: hidden;
    border: solid var(--line);
    border-width: 1px 1px 0;
}

.output h1{
    padding-top: 2px;
}

.output button{
    padding-top: 8px;
}

/* properties */
.props-panel{
    position: relative;
    border-left: 1px solid var(--line);
}

.props{
    display: flex;
    flex-direction: column;
    flex: 1;
    min-height: 0;
    padding: 10px 4px 22px 5px;
    background: var(--dark);
}

.props select, .field input, .coord input{
    height: 17px;
    min-width: 0;
    padding: 0 2px;
    border: 1px solid #999;
    background: var(--field);
    color: #444;
    font-size: 9px;
}

.props select{
    appearance: none;
    background: var(--field) url("data:image/svg+xml,%3Csvg xmlns='http://www.w3.org/2000/svg' viewBox='0 0 8 5'%3E%3Cpath d='M0 0h8L4 5z' fill='%23777'/%3E%3C/svg%3E") no-repeat right 3px center / 7px 4px;
}

.props .pick{
    width: 101px;
}

.frame-row{
    display: flex;
    align-items: center;
    height: 14px;
    margin: 10px 0 7px;
    white-space: nowrap;
}

.frame-row > span{
    width: 72px;
}

.frame-row .check + .check{
    margin-left: 8px;
}

.frame-row .check:last-child{
    margin-left: 2px;
}

.clip{
    width: 26px;
    overflow: hidden;
}

.coords{
    display: grid;
    grid-template-columns: repeat(3, 1fr);
    gap: 4px;
}

.coord{
    display: flex;
}

.coord b{
    width: 14px;
    flex: none;
    background: #484848;
    line-height: 17px;
    text-align: center;
    font-weight: 400;
}

.coord input{
    width: 100%;
    padding: 0 0 0 1px;
    border-left: 0;
}

.coord.x b{ background: #ff3508; }
.coord.y b{ background: #2aa84a; }
.coord.z b{ background: #0a28b4; }

.fields{
    display: flex;
    flex-direction: column;
    justify-content: space-between;
    flex: 1;
    margin-top: 17px;
}

.field{
    display: flex;
    align-items: center;
}

.field label{
    width: 64px;
    flex: none;
    margin-right: 2px;
    overflow: hidden;
    text-overflow: ellipsis;
    white-space: nowrap;
}

.field input, .field select{
    flex: 1;
}

.picker{
    margin-left: 5px;
}

.picker svg{
    width: 16px;
    height: 16px;
}

/* site mark in the corner */
.mark{
    position: absolute;
    right: 12px;
    bottom: 10px;
    display: flex;
    align-items: flex-end;
    color: #777;
    pointer-events: none;
}

.mark svg{
    width: 32px;
    height: 44px;
}

.mark strong, .mark span{
    display: block;
}

.mark strong{
    color: rgba(190, 190, 190, .3);
    font-size: 26px;
    line-height: 34px;
    -webkit-text-stroke: 1px #8a8a8a;
}

.mark span{
    font-size: 9px;
    line-height: 12px;
}
```
